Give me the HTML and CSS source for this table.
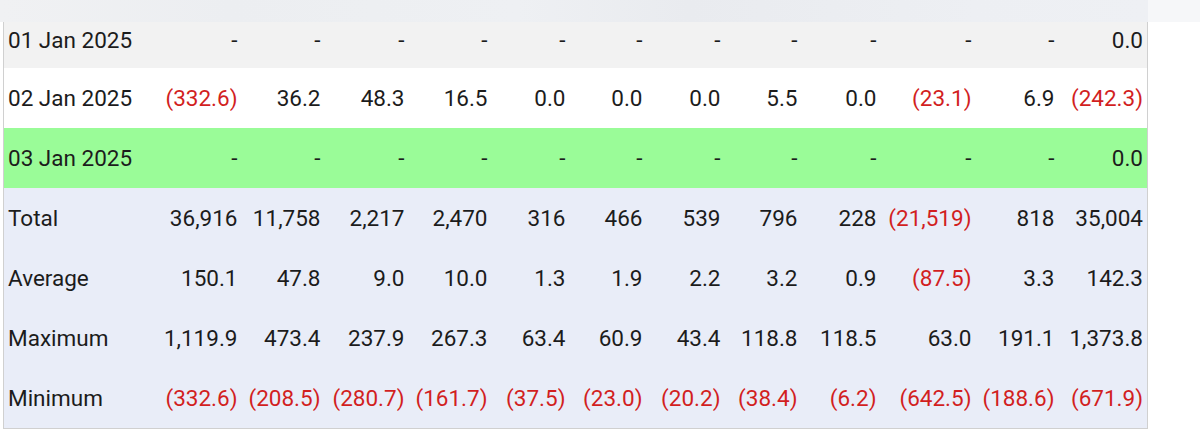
FILE: index.html
```html
<!DOCTYPE html>
<html>
<head>
<meta charset="utf-8">
<link rel="stylesheet" href="styles.css">
</head>
<body>
<div class="topbar"><div class="topbar-fill"></div></div>
<div class="wrap">
<table class="grid">
<colgroup>
<col class="c-date"><col class="w82"><col class="w83"><col class="w84"><col class="w83"><col class="w78"><col class="w77"><col class="w78"><col class="w77"><col class="w79"><col class="w95"><col class="w83"><col class="w89">
</colgroup>
<tbody>
<tr class="r-first">
<td>01 Jan 2025</td><td>-</td><td>-</td><td>-</td><td>-</td><td>-</td><td>-</td><td>-</td><td>-</td><td>-</td><td>-</td><td>-</td><td>0.0</td>
</tr>
<tr class="r-white">
<td>02 Jan 2025</td><td class="neg">(332.6)</td><td>36.2</td><td>48.3</td><td>16.5</td><td>0.0</td><td>0.0</td><td>0.0</td><td>5.5</td><td>0.0</td><td class="neg">(23.1)</td><td>6.9</td><td class="neg">(242.3)</td>
</tr>
<tr class="r-green">
<td>03 Jan 2025</td><td>-</td><td>-</td><td>-</td><td>-</td><td>-</td><td>-</td><td>-</td><td>-</td><td>-</td><td>-</td><td>-</td><td>0.0</td>
</tr>
<tr class="r-sum">
<td>Total</td><td>36,916</td><td>11,758</td><td>2,217</td><td>2,470</td><td>316</td><td>466</td><td>539</td><td>796</td><td>228</td><td class="neg">(21,519)</td><td>818</td><td>35,004</td>
</tr>
<tr class="r-sum">
<td>Average</td><td>150.1</td><td>47.8</td><td>9.0</td><td>10.0</td><td>1.3</td><td>1.9</td><td>2.2</td><td>3.2</td><td>0.9</td><td class="neg">(87.5)</td><td>3.3</td><td>142.3</td>
</tr>
<tr class="r-sum">
<td>Maximum</td><td>1,119.9</td><td>473.4</td><td>237.9</td><td>267.3</td><td>63.4</td><td>60.9</td><td>43.4</td><td>118.8</td><td>118.5</td><td>63.0</td><td>191.1</td><td>1,373.8</td>
</tr>
<tr class="r-sum">
<td>Minimum</td><td class="neg">(332.6)</td><td class="neg">(208.5)</td><td class="neg">(280.7)</td><td class="neg">(161.7)</td><td class="neg">(37.5)</td><td class="neg">(23.0)</td><td class="neg">(20.2)</td><td class="neg">(38.4)</td><td class="neg">(6.2)</td><td class="neg">(642.5)</td><td class="neg">(188.6)</td><td class="neg">(671.9)</td>
</tr>
</tbody>
</table>
</div>
</body>
</html>
```
FILE: styles.css
```css
html, body {
  margin: 0;
  padding: 0;
  background: #ffffff;
}
body {
  font-family: Roboto, "Noto Sans", sans-serif;
  color: #1c1c1c;
  width: 1200px;
  height: 443px;
  overflow: hidden;
}
.topbar {
  height: 22px;
  display: flex;
  background: #f6f7f9;
}
.topbar-fill {
  width: 1148px;
  background: linear-gradient(90deg, #f0f1f3 0%, #eceef1 20%, #eef0f3 45%, #e9ebef 60%, #edeff3 85%, #eef0f4 100%);
}
.wrap {
  padding-left: 3px;
}
.grid {
  border-collapse: collapse;
  table-layout: fixed;
  width: 1145px;
  border: 1px solid #d0d0d0;
  border-top: none;
  font-size: 22.5px;
}
.c-date { width: 156px; }
.w77 { width: 77px; }
.w78 { width: 78px; }
.w79 { width: 79px; }
.w82 { width: 82px; }
.w83 { width: 83px; }
.w84 { width: 84px; }
.w89 { width: 89px; }
.w95 { width: 95px; }
.grid td {
  height: 60px;
  padding: 0 4px 0 0;
  text-align: right;
  white-space: nowrap;
  vertical-align: middle;
  line-height: 1;
}
.grid td:first-child {
  text-align: left;
  padding-left: 4px;
}
.grid .r-first td {
  height: 46px;
  padding-bottom: 10px;
  box-sizing: border-box;
}
.r-first { background: #f2f2f2; }
.r-white { background: #ffffff; }
.r-green { background: #9afc98; }
.r-sum { background: #e9edf8; }
.grid td.neg { color: #d21f1f; }
```
